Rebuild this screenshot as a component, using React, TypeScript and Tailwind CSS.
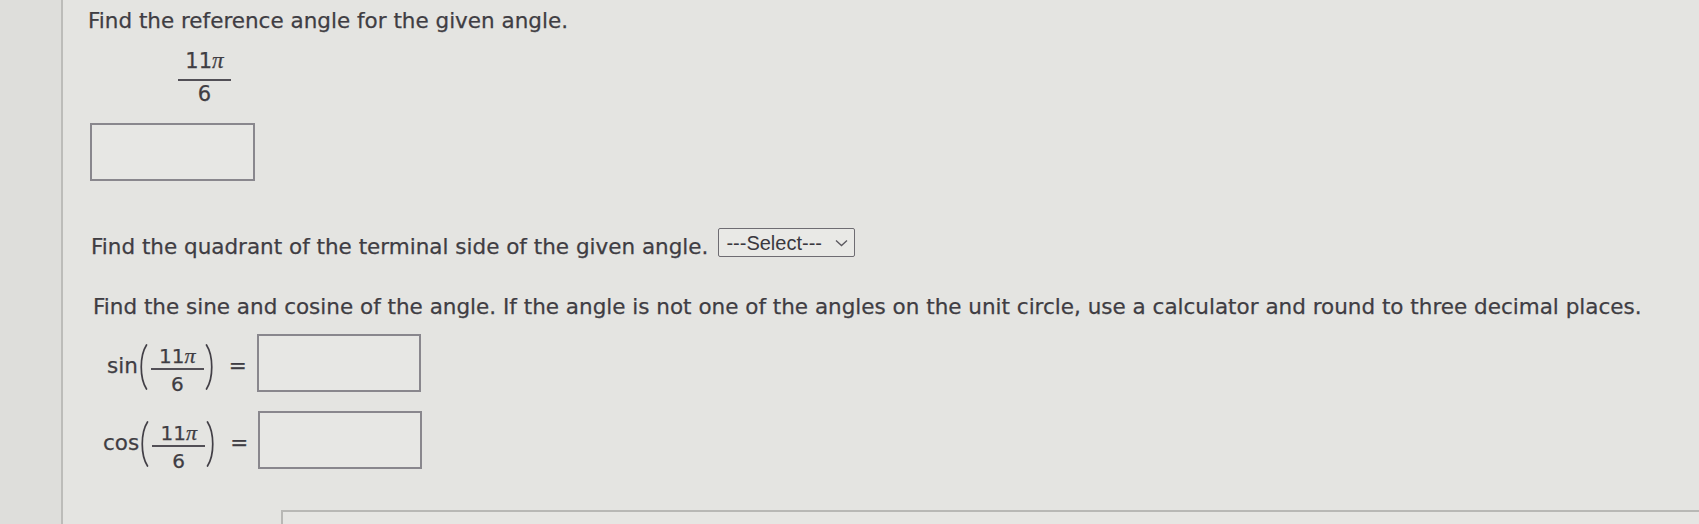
import React from 'react'

const sans = "font-['DejaVu_Sans',Verdana,sans-serif]"

function Paren({ side }: { side: 'left' | 'right' }) {
  return (
    <svg width="10" height="46" viewBox="0 0 10 46" className="block shrink-0">
      <path
        d={side === 'left' ? 'M8.5 1 C1.5 12 1.5 34 8.5 45' : 'M1.5 1 C8.5 12 8.5 34 1.5 45'}
        fill="none"
        stroke="#423f46"
        strokeWidth="1.7"
        strokeLinecap="round"
      />
    </svg>
  )
}

function Fraction({ tight = false }: { tight?: boolean }) {
  return (
    <div className={`flex w-[53px] flex-col items-center ${tight ? 'text-[20px] leading-[21px]' : 'text-[21px] leading-[21px]'}`}>
      <span>
        11<span className="font-['Liberation_Serif',serif] text-[1.1em] italic">π</span>
      </span>
      <span className={`h-[2px] w-full bg-[#524f56] ${tight ? 'mt-[1px]' : 'mt-[7px]'}`} />
      <span className={tight ? 'mt-[4px]' : 'mt-[3px]'}>6</span>
    </div>
  )
}

function AnswerBox() {
  return <div className="h-[58px] w-[164px] shrink-0 border-2 border-[#89878d] bg-[#e7e7e4]" />
}

function TrigRow({ fn, indent }: { fn: string; indent: string }) {
  return (
    <div className="flex items-start">
      <span className={`${indent} mt-[19px]`}>{fn}</span>
      <div className="mt-[10px] flex">
        <Paren side="left" />
      </div>
      <div className="ml-[3px] mt-[11px] flex">
        <Fraction tight />
      </div>
      <div className="ml-[1px] mt-[10px] flex">
        <Paren side="right" />
      </div>
      <span className="ml-[14px] mt-[19px]">=</span>
      <div className="ml-[10px] flex">
        <AnswerBox />
      </div>
    </div>
  )
}

export default function App() {
  return (
    <div className="flex h-[524px] w-[1699px] overflow-hidden bg-[#e4e4e1]">
      <div className="w-[63px] shrink-0 border-r-2 border-[#bcbcb9] bg-[#dededb]" />

      <div
        className={`${sans} flex flex-1 flex-col items-start pl-[25px] pt-[8px] text-[21.5px] leading-[25px] text-[#3f3d43] [-webkit-text-stroke:0.25px_#3f3d43] [&>*]:shrink-0`}
      >
        {/* Reference angle */}
        <p>Find the reference angle for the given angle.</p>
        <div className="ml-[90px] mt-[17px] flex">
          <Fraction />
        </div>
        <div className="ml-[2px] mt-[18px] h-[58px] w-[165px] border-2 border-[#89878d] bg-[#e7e7e4]" />

        {/* Quadrant */}
        <div className="mt-[47px] flex items-start">
          <p className="ml-[3px] mt-[6px]">Find the quadrant of the terminal side of the given angle.</p>
          <div className="ml-[10px] flex h-[29px] w-[137px] items-center justify-between rounded-[2px] border-[1.5px] border-[#6e6c72] bg-[#e9e9e6] pl-[7px] pr-[6px] font-['Liberation_Sans',Arial,sans-serif] text-[20px] leading-none text-[#3a383e] [-webkit-text-stroke:0px]">
            <span>---Select---</span>
            <svg width="13" height="8" viewBox="0 0 13 8" className="block">
              <path d="M1 1.5 L6.5 6.5 L12 1.5" fill="none" stroke="#5a585e" strokeWidth="1.3" />
            </svg>
          </div>
        </div>

        {/* Sine and cosine */}
        <p className="ml-[5px] mt-[35px]">
          Find the sine and cosine of the angle. If the angle is not one of the angles on the unit circle, use a calculator and
          round to three decimal places.
        </p>
        <div className="mt-[15px]">
          <TrigRow fn="sin" indent="ml-[19px]" />
        </div>
        <div className="mt-[16px]">
          <TrigRow fn="cos" indent="ml-[15px]" />
        </div>

        {/* Next question */}
        <div className="ml-[193px] mt-[38px] h-[40px] w-[1500px] border-l-2 border-t-2 border-[#b8b8b5] bg-[#e6e6e3]" />
      </div>
    </div>
  )
}
